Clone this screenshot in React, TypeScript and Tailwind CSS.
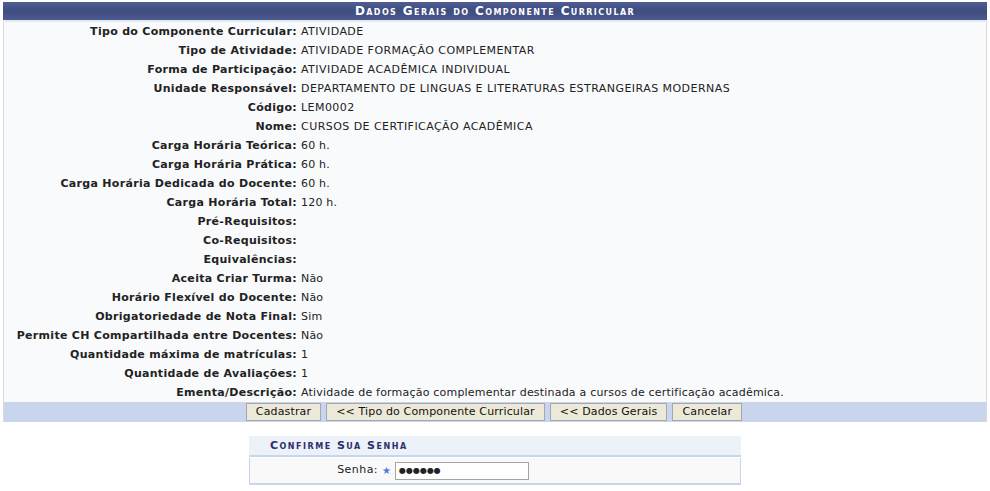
import React from "react";

const rows: [string, string][] = [
  ["Tipo do Componente Curricular:", "ATIVIDADE"],
  ["Tipo de Atividade:", "ATIVIDADE FORMAÇÃO COMPLEMENTAR"],
  ["Forma de Participação:", "ATIVIDADE ACADÊMICA INDIVIDUAL"],
  ["Unidade Responsável:", "DEPARTAMENTO DE LINGUAS E LITERATURAS ESTRANGEIRAS MODERNAS"],
  ["Código:", "LEM0002"],
  ["Nome:", "CURSOS DE CERTIFICAÇÃO ACADÊMICA"],
  ["Carga Horária Teórica:", "60 h."],
  ["Carga Horária Prática:", "60 h."],
  ["Carga Horária Dedicada do Docente:", "60 h."],
  ["Carga Horária Total:", "120 h."],
  ["Pré-Requisitos:", ""],
  ["Co-Requisitos:", ""],
  ["Equivalências:", ""],
  ["Aceita Criar Turma:", "Não"],
  ["Horário Flexível do Docente:", "Não"],
  ["Obrigatoriedade de Nota Final:", "Sim"],
  ["Permite CH Compartilhada entre Docentes:", "Não"],
  ["Quantidade máxima de matrículas:", "1"],
  ["Quantidade de Avaliações:", "1"],
  ["Ementa/Descrição:", "Atividade de formação complementar destinada a cursos de certificação acadêmica."],
];

const font = { fontFamily: '"DejaVu Sans", Verdana, sans-serif' };

function Btn({ children }: { children: React.ReactNode }) {
  return (
    <button className="h-[18px] px-[9px] bg-[#ece9d8] border border-[#a7a6aa] text-[11px] leading-[16px] tracking-[0.15px] text-[#111]">
      {children}
    </button>
  );
}

export default function App() {
  return (
    <div className="w-[990px] h-[491px] bg-white text-[11px] text-[#222] overflow-hidden" style={font}>
      <div className="pt-[2px] px-[3px]">
        <div className="w-[984px]">
          <div className="h-[18px] bg-gradient-to-b from-[#4f5d92] via-[#3f4c80] to-[#4b5a8f] text-white font-bold text-center text-[12px] leading-[18px] tracking-[1.4px] [font-variant:small-caps]">
            Dados Gerais do Componente Curricular
          </div>
          <div className="h-[2px] bg-[#e4e8f0]" />
          <div className="bg-[#f9fafc] border-x border-[#d8d8d8]">
            {rows.map(([l, v], i) => {
              const upper = v === v.toUpperCase();
              return (
                <div key={i} className="grid grid-cols-[293px_1fr] h-[19px] pt-[2px] items-center">
                  <div className="text-right font-bold tracking-[0.3px]">{l}</div>
                  <div className={upper ? "pl-[4px] whitespace-nowrap tracking-[0.45px]" : "pl-[4px] whitespace-nowrap tracking-[0.2px]"}>{v}</div>
                </div>
              );
            })}
          </div>
          <div className="h-[20px] bg-[#c8d5ec] border-x border-[#d8d8d8] flex justify-center items-center gap-[5px] pr-[2px]">
            <Btn>Cadastrar</Btn>
            <Btn>&lt;&lt; Tipo do Componente Curricular</Btn>
            <Btn>&lt;&lt; Dados Gerais</Btn>
            <Btn>Cancelar</Btn>
          </div>
        </div>
      </div>
      <div className="ml-[249px] mt-[14px] w-[492px]">
        <div className="h-[19px] bg-[#edf1f8] pl-[21px] text-[#2c2f6b] font-bold text-[11px] leading-[19px] tracking-[1.5px] [font-variant:small-caps]">
          Confirme Sua Senha
        </div>
        <div className="h-[2px] bg-[#c8d5ec]" />
        <div className="h-[27px] mt-[1px] border-[2px] border-[#c8d5ec] border-t-0 border-x bg-[#f9f9f9] flex items-center">
          <div className="w-[131px] text-right pr-[3px] tracking-[0.45px]">Senha:</div>
          <span className="text-[#4a7bd6] text-[10px] leading-none ml-[1px] mr-[4px]">★</span>
          <div className="w-[134px] h-[18px] border border-[#a5a5a5] bg-white flex items-center pl-[3px] text-[8px] tracking-[0px]">
            ●●●●●●
          </div>
        </div>
      </div>
    </div>
  );
}
